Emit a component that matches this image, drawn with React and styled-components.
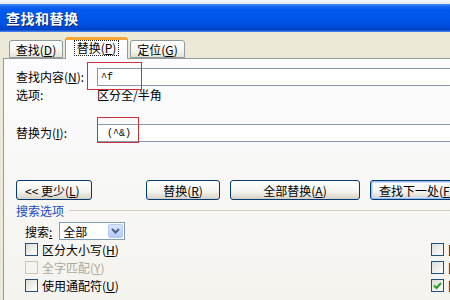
import React from "react";
import styled, { createGlobalStyle } from "styled-components";

const GlobalStyle = createGlobalStyle`
  html, body {
    margin: 0;
    padding: 0;
  }
  body {
    width: 450px;
    height: 300px;
    overflow: hidden;
    background: #ece9d8;
    font-family: "Noto Sans CJK SC", "DejaVu Sans", sans-serif;
    font-size: 12px;
    color: #000;
  }
`;

const Window = styled.div`
  position: relative;
  width: 450px;
  height: 300px;
  overflow: hidden;
  display: flex;
  flex-direction: column;
`;

const BackStrip = styled.div`
  height: 4px;
  background: linear-gradient(#f6f7fa, #e3e7ee);
`;

const TitleBar = styled.div`
  height: 28px;
  display: flex;
  align-items: center;
  padding-left: 6px;
  color: #fff;
  font-weight: bold;
  font-size: 14px;
  letter-spacing: 0.5px;
  text-shadow: 1px 1px 0 #0a246a;
  background: linear-gradient(
    #4d92f8 0%,
    #1a68f0 8%,
    #0058ee 20%,
    #0055e8 60%,
    #0048d6 85%,
    #0040c4 92%,
    #4f8ff6 100%
  );
`;

const Body = styled.div`
  flex: 1;
  background: #ece9d8;
  padding: 5px 0 0 3px;
  display: flex;
  flex-direction: column;
`;

const TabRow = styled.div`
  display: flex;
  align-items: flex-end;
  height: 21px;
  padding-left: 6px;
  gap: 2px;
  position: relative;
  z-index: 2;
`;

const Tab = styled.div`
  width: ${(p) => p.$w}px;
  height: ${(p) => (p.$active ? 22 : 18)}px;
  margin-bottom: ${(p) => (p.$active ? -1 : 0)}px;
  margin-left: ${(p) => (p.$active ? 0 : 0)}px;
  box-sizing: border-box;
  display: flex;
  align-items: center;
  justify-content: center;
  border: 1px solid #919b9c;
  border-bottom: ${(p) => (p.$active ? "none" : "1px solid #919b9c")};
  border-top: ${(p) => (p.$active ? "3px solid #f7a534" : "1px solid #919b9c")};
  border-radius: 3px 3px 0 0;
  background: ${(p) =>
    p.$active ? "#fcfcfe" : "linear-gradient(#ffffff, #f3f2ec 70%, #e4e2d6)"};
  padding-bottom: ${(p) => (p.$active ? 3 : 0)}px;
`;

const Focus = styled.span`
  outline: 1px dotted #222;
  padding: 0 2px;
  line-height: 14px;
`;

const Panel = styled.div`
  flex: 1;
  width: 480px;
  box-sizing: border-box;
  border: 1px solid #919b9c;
  border-right: none;
  border-bottom: none;
  background: linear-gradient(#fcfcfe, #f4f3ee);
  padding: 9px 0 0 12px;
  display: flex;
  flex-direction: column;
`;

const FormGrid = styled.div`
  display: grid;
  grid-template-columns: 81px 1fr;
  grid-auto-rows: 18px;
  align-items: center;
`;

const Label = styled.span`
  white-space: nowrap;
  line-height: 18px;
`;

const Input = styled.div`
  height: 18px;
  box-sizing: border-box;
  border: 1px solid #8a99aa;
  background: #fff;
  padding-left: 3px;
  display: flex;
  align-items: center;
  font-family: "Liberation Mono", "DejaVu Sans Mono", monospace;
  font-size: 10px;
  white-space: pre;
`;

const Spacer = styled.div`
  height: ${(p) => p.$h}px;
`;

const ButtonRow = styled.div`
  display: flex;
  align-items: center;
  height: 20px;
`;

const LeftGroup = styled.div`
  width: 130px;
  display: flex;
`;

const RightGroup = styled.div`
  display: flex;
  gap: ${(p) => p.$gap}px;
`;

const Button = styled.div`
  width: ${(p) => p.$w}px;
  height: 20px;
  box-sizing: border-box;
  flex-shrink: 0;
  display: flex;
  align-items: center;
  justify-content: ${(p) => (p.$left ? "flex-start" : "center")};
  padding-left: ${(p) => (p.$left ? 8 : 0)}px;
  border: 1px solid #003c74;
  border-radius: 3px;
  background: linear-gradient(#ffffff, #f4f3ee 60%, #d6d0c5);
  box-shadow: ${(p) =>
    p.$default ? "inset 0 0 0 1px #9bbbf3, inset 0 0 0 2px #cde0fb" : "none"};
  white-space: nowrap;
`;

const SectionHead = styled.div`
  display: flex;
  align-items: center;
  height: 14px;
  margin-top: 3px;
`;

const SectionTitle = styled.span`
  color: #1b4bbf;
  white-space: nowrap;
`;

const SectionLine = styled.div`
  flex: 1;
  margin-left: 5px;
  border-top: 1px solid #d0d0bf;
`;

const OptionsGrid = styled.div`
  display: grid;
  grid-template-columns: 415px 1fr;
  grid-template-rows: 18px repeat(3, 18px);
  margin-top: 5px;
  align-items: center;
`;

const SearchRow = styled.div`
  display: flex;
  align-items: center;
  padding-left: 9px;
`;

const Select = styled.div`
  width: 66px;
  height: 18px;
  box-sizing: border-box;
  border: 1px solid #7f9db9;
  background: #fff;
  margin-left: 7px;
  display: flex;
  align-items: center;
  justify-content: space-between;
  padding: 1px 1px 1px 3px;
`;

const ArrowBtn = styled.div`
  width: 15px;
  height: 14px;
  border-radius: 2px;
  background: linear-gradient(#dae6fe, #b3c9f9);
  border: 1px solid #b7c9f0;
  box-sizing: border-box;
  display: flex;
  align-items: center;
  justify-content: center;
`;

const CheckRow = styled.div`
  display: flex;
  align-items: center;
  gap: 4px;
  padding-left: ${(p) => (p.$right ? 0 : 9)}px;
  color: ${(p) => (p.$disabled ? "#aca899" : "#000")};
  white-space: nowrap;
`;

const Box = styled.div`
  width: 13px;
  height: 13px;
  box-sizing: border-box;
  border: 1px solid ${(p) => (p.$disabled ? "#c9c7ba" : "#1c5180")};
  background: ${(p) =>
    p.$disabled ? "#f4f3ee" : "linear-gradient(135deg, #dcdcd7, #ffffff)"};
  display: flex;
  align-items: center;
  justify-content: center;
  flex-shrink: 0;
`;

const Mark = styled.div`
  position: absolute;
  left: ${(p) => p.$x}px;
  top: ${(p) => p.$y}px;
  width: ${(p) => p.$w}px;
  height: ${(p) => p.$h}px;
  box-sizing: border-box;
  border: 1px solid #c9323a;
  pointer-events: none;
  z-index: 5;
`;

const Check = () => (
  <svg width="9" height="9" viewBox="0 0 9 9">
    <path d="M1 4.5 L3.5 7 L8 2" stroke="#21a121" strokeWidth="2" fill="none" />
  </svg>
);

const Chevron = () => (
  <svg width="9" height="6" viewBox="0 0 9 6">
    <path d="M1 1 L4.5 4.5 L8 1" stroke="#4d6185" strokeWidth="2" fill="none" />
  </svg>
);

const Opt = ({ label, k, checked, disabled, right }) => (
  <CheckRow $disabled={disabled} $right={right}>
    <Box $disabled={disabled}>{checked && <Check />}</Box>
    <span>
      {label}(<u>{k}</u>)
    </span>
  </CheckRow>
);

export default function App() {
  return (
    <>
      <GlobalStyle />
      <Window>
        <BackStrip />
        <TitleBar>查找和替换</TitleBar>
        <Body>
          <TabRow>
            <Tab $w={54}>
              查找(<u>D</u>)
            </Tab>
            <Tab $w={63} $active>
              <Focus>
                替换(<u>P</u>)
              </Focus>
            </Tab>
            <Tab $w={55}>
              定位(<u>G</u>)
            </Tab>
          </TabRow>
          <Panel>
            <FormGrid>
              <Label>
                查找内容(<u>N</u>):
              </Label>
              <Input>^f</Input>
              <Label>选项:</Label>
              <Label>区分全/半角</Label>
            </FormGrid>
            <Spacer $h={20} />
            <FormGrid>
              <Label>
                替换为(<u>I</u>):
              </Label>
              <Input> (^&amp;)</Input>
            </FormGrid>
            <Spacer $h={38} />
            <ButtonRow>
              <LeftGroup>
                <Button $w={76} $left>
                  &lt;&lt; 更少(<u>L</u>)
                </Button>
              </LeftGroup>
              <RightGroup $gap={10}>
                <Button $w={74}>
                  替换(<u>R</u>)
                </Button>
                <Button $w={130}>
                  全部替换(<u>A</u>)
                </Button>
                <Button $w={112} $default $left>
                  查找下一处(<u>F</u>)
                </Button>
              </RightGroup>
            </ButtonRow>
            <SectionHead>
              <SectionTitle>搜索选项</SectionTitle>
              <SectionLine />
            </SectionHead>
            <OptionsGrid>
              <SearchRow>
                <span>
                  搜索<u>:</u>
                </span>
                <Select>
                  <span>全部</span>
                  <ArrowBtn>
                    <Chevron />
                  </ArrowBtn>
                </Select>
              </SearchRow>
              <div />
              <Opt label="区分大小写" k="H" />
              <Opt label="区分前缀" k="X" right />
              <Opt label="全字匹配" k="Y" disabled />
              <Opt label="区分后缀" k="T" right />
              <Opt label="使用通配符" k="U" />
              <Opt label="区分全/半角" k="M" checked right />
            </OptionsGrid>
          </Panel>
        </Body>
        <Mark $x={87} $y={62} $w={55} $h={28} />
        <Mark $x={97} $y={117} $w={42} $h={26} />
      </Window>
    </>
  );
}
